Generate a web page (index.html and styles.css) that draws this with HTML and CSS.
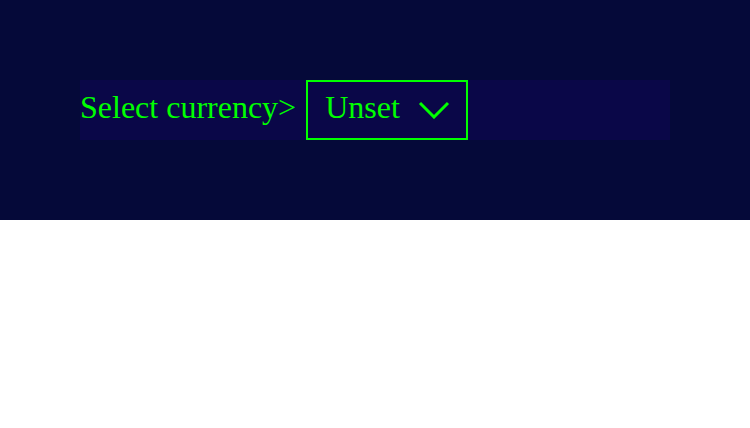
FILE: index.html
```html
<!DOCTYPE html>
<html>
<head>
<meta charset="utf-8">
<link rel="stylesheet" href="styles.css">
</head>
<body>
<header class="header">
  <div class="bar">
    <span class="label">Select currency&gt;</span>
    <div class="select">
      <span class="value">Unset</span>
      <svg class="chevron" width="32" height="18" viewBox="0 0 32 18"><path d="M2 2 L16 16 L30 2" fill="none" stroke="#00ff00" stroke-width="3"/></svg>
    </div>
  </div>
</header>
</body>
</html>
```
FILE: styles.css
```css
html, body { margin: 0; padding: 0; background: #ffffff; }
.header {
  height: 220px;
  box-sizing: border-box;
  padding: 80px 80px;
  background: #050939;
}
.bar {
  width: 590px;
  height: 60px;
  background: #0a0748;
  display: flex;
  align-items: center;
  font-family: "Liberation Serif", serif;
  font-size: 32px;
  line-height: 1;
  color: #00ff00;
}
.label { margin-right: 10px; margin-bottom: 6px; }
.value { margin-bottom: 6px; }
.select {
  box-sizing: border-box;
  height: 60px;
  width: 162px;
  border: 2px solid #00ff00;
  display: flex;
  align-items: center;
  padding: 0 16px 0 17px;
  justify-content: space-between;
}
.chevron { display: block; margin-bottom: 1px; }
```
